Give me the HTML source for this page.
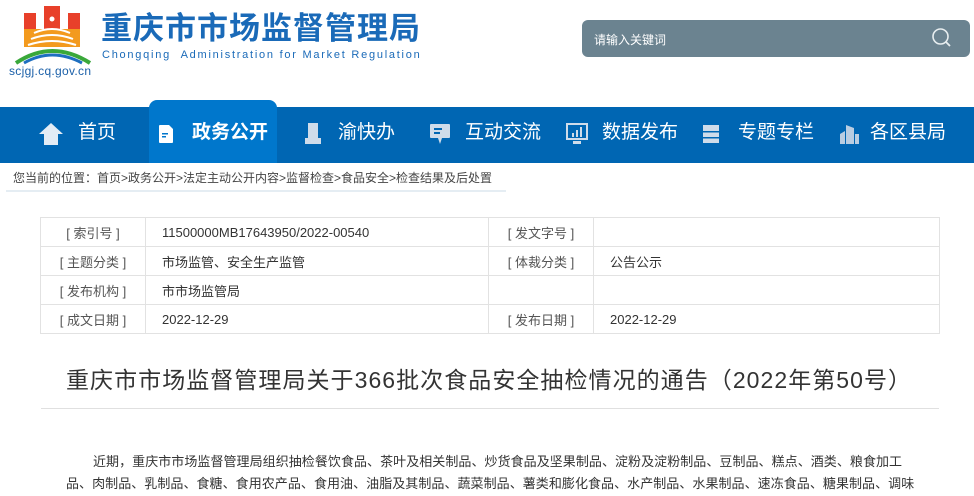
<!DOCTYPE html>
<html><head><meta charset="utf-8"><style>
*{margin:0;padding:0;box-sizing:border-box}
body{width:974px;height:496px;overflow:hidden;background:#fff;font-family:"Liberation Sans","Noto Sans CJK SC",sans-serif;position:relative}
.abs{position:absolute}
.nav{left:0;top:107px;width:974px;height:56px;background:#0066b3}
.act{left:149px;top:100px;width:128px;height:63px;background:#0077cc;border-radius:8px 8px 0 0}
.ni{position:absolute;top:118px;font-size:19px;color:#fff;line-height:30px;white-space:nowrap}
table{position:absolute;left:40px;top:217px;border-collapse:collapse;font-size:13px;color:#333}
td{border:1px solid #e2e2e2;height:29px;padding:0}
td.l{text-align:center;color:#555}
td.v{padding-left:16px}
</style></head><body>
<svg class="abs" style="left:8px;top:3px" width="86" height="62" viewBox="0 0 86 62">
<rect x="16" y="10" width="12" height="28" fill="#e8402a"/>
<rect x="36" y="3" width="16" height="30" fill="#e8402a"/>
<rect x="60" y="10" width="12" height="28" fill="#e8402a"/>
<rect x="16" y="26" width="56" height="18" fill="#f39a1e"/>
<circle cx="44" cy="16" r="2.5" fill="#fff"/>
<path d="M26 30 Q44 22 62 30 M23 36 Q44 28 65 36 M20 42 Q44 34 68 42" stroke="#fff" stroke-width="2" fill="none"/>
<path d="M8 60 Q44 36 82 60" stroke="#3aa83a" stroke-width="4" fill="none"/>
<path d="M16 60 Q44 44 74 60" stroke="#1e6fc0" stroke-width="3" fill="none"/>
</svg>
<div class="abs" style="left:9px;top:64px;font-size:12px;color:#1a5fa8;letter-spacing:.3px">scjgj.cq.gov.cn</div>
<div class="abs" style="left:101px;top:9px;font-size:31px;font-weight:bold;color:#1a6ab8;letter-spacing:1px;line-height:40px">重庆市市场监督管理局</div>
<div class="abs" style="left:102px;top:49px;font-size:11px;color:#1a6ab8;letter-spacing:1.75px;white-space:nowrap">Chongqing &nbsp;Administration for Market Regulation</div>
<div class="abs" style="left:582px;top:20px;width:388px;height:37px;background:#6b8390;border-radius:6px"></div>
<div class="abs" style="left:594px;top:31px;font-size:12px;color:#fff">请输入关键词</div>
<svg class="abs" style="left:931px;top:27px" width="22" height="22" viewBox="0 0 22 22"><circle cx="9.5" cy="9.5" r="7.5" stroke="#e8eef0" stroke-width="1.6" fill="none"/><path d="M15 15 L19 19" stroke="#e8eef0" stroke-width="1.8"/></svg>
<div class="abs nav"></div>
<div class="abs act"></div>
<svg class="abs" style="left:38px;top:122px" width="26" height="24" viewBox="0 0 26 24"><path d="M13 1 L25 12 H20 V23 H6 V12 H1Z" fill="#e3ecf5"/></svg>
<div class="ni" style="left:78px">首页</div>
<svg class="abs" style="left:158px;top:124px" width="16" height="20" viewBox="0 0 16 20"><path d="M1 2 Q1 1 2 1 H11 L15 5 V18 Q15 19 14 19 H2 Q1 19 1 18Z" fill="#fff"/><rect x="4" y="9" width="6" height="1.5" fill="#0077cc"/><rect x="4" y="12" width="4" height="1.5" fill="#0077cc"/></svg>
<div class="ni" style="left:192px;font-weight:bold">政务公开</div>
<svg class="abs" style="left:304px;top:122px" width="18" height="24" viewBox="0 0 18 24"><rect x="4" y="1" width="10" height="15" fill="#cfdcea"/><rect x="1" y="16" width="16" height="6" fill="#cfdcea"/></svg>
<div class="ni" style="left:338px">渝快办</div>
<svg class="abs" style="left:428px;top:122px" width="24" height="24" viewBox="0 0 24 24"><path d="M3 2 H21 Q22 2 22 3 V15 Q22 16 21 16 H14 L12 22 L10 16 H3 Q2 16 2 15 V3 Q2 2 3 2Z" fill="#cfdcea"/><rect x="6" y="6" width="8" height="2" fill="#0066b3"/><rect x="6" y="10" width="6" height="2" fill="#0066b3"/></svg>
<div class="ni" style="left:465px">互动交流</div>
<svg class="abs" style="left:565px;top:122px" width="24" height="24" viewBox="0 0 24 24"><rect x="2" y="2" width="20" height="15" fill="none" stroke="#cfdcea" stroke-width="2"/><rect x="8" y="19" width="8" height="3" fill="#cfdcea"/><rect x="7" y="11" width="2" height="4" fill="#cfdcea"/><rect x="11" y="8" width="2" height="7" fill="#cfdcea"/><rect x="15" y="5" width="2" height="10" fill="#cfdcea"/></svg>
<div class="ni" style="left:602px">数据发布</div>
<svg class="abs" style="left:702px;top:124px" width="18" height="20" viewBox="0 0 18 20"><rect x="1" y="1" width="16" height="18" fill="#cfdcea"/><rect x="1" y="7" width="16" height="1.5" fill="#0066b3"/><rect x="1" y="13" width="16" height="1.5" fill="#0066b3"/></svg>
<div class="ni" style="left:738px">专题专栏</div>
<svg class="abs" style="left:837px;top:122px" width="24" height="24" viewBox="0 0 24 24"><path d="M3 22 V12 L8 9 V22 M9 22 V3 L17 6 V22 M18 22 V12 H22 V22Z" fill="#b9cde2"/></svg>
<div class="ni" style="left:870px">各区县局</div>
<div class="abs" style="left:13px;top:170px;font-size:12px;color:#444;line-height:16px">您当前的位置：首页&gt;政务公开&gt;法定主动公开内容&gt;监督检查&gt;食品安全&gt;检查结果及后处置</div>
<div class="abs" style="left:6px;top:190px;width:500px;height:2px;background:#e5edf3"></div>
<table>
<tr><td class="l" style="width:105px">[ 索引号 ]</td><td class="v" style="width:343px">11500000MB17643950/2022-00540</td><td class="l" style="width:105px">[ 发文字号 ]</td><td class="v" style="width:346px"></td></tr>
<tr><td class="l">[ 主题分类 ]</td><td class="v">市场监管、安全生产监管</td><td class="l">[ 体裁分类 ]</td><td class="v">公告公示</td></tr>
<tr><td class="l">[ 发布机构 ]</td><td class="v">市市场监管局</td><td class="l"></td><td class="v"></td></tr>
<tr><td class="l">[ 成文日期 ]</td><td class="v">2022-12-29</td><td class="l">[ 发布日期 ]</td><td class="v">2022-12-29</td></tr>
</table>
<div class="abs" style="left:66px;top:364px;font-size:23px;color:#333;white-space:nowrap;line-height:32px;letter-spacing:1.05px">重庆市市场监督管理局关于366批次食品安全抽检情况的通告（2022年第50号）</div>
<div class="abs" style="left:41px;top:408px;width:898px;height:1px;background:#e0e0e0"></div>
<div class="abs" style="left:66px;top:451px;width:850px;font-size:13px;color:#333;line-height:22px;text-indent:27px;letter-spacing:.05px">近期，重庆市市场监督管理局组织抽检餐饮食品、茶叶及相关制品、炒货食品及坚果制品、淀粉及淀粉制品、豆制品、糕点、酒类、粮食加工品、肉制品、乳制品、食糖、食用农产品、食用油、油脂及其制品、蔬菜制品、薯类和膨化食品、水产制品、水果制品、速冻食品、糖果制品、调味</div>
</body></html>
